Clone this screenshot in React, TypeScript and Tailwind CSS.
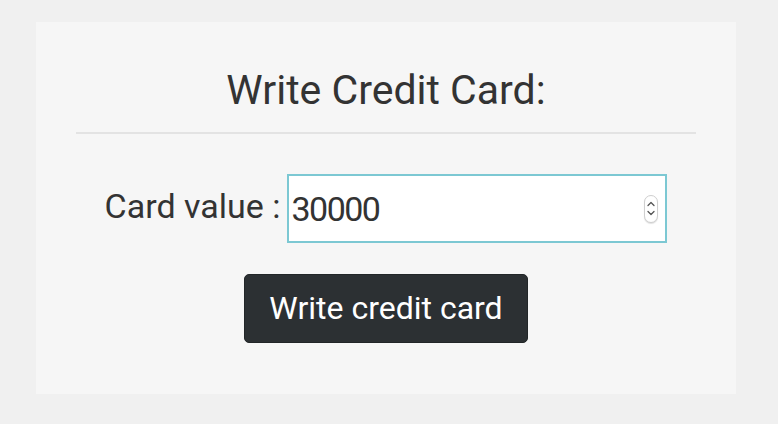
import React from 'react';

function Stepper() {
  return (
    <div className="pointer-events-none absolute right-[9px] top-1/2 flex h-[28px] w-[14px] -translate-y-1/2 flex-col items-center justify-center gap-[3px] rounded-full border border-[#cfcfcf] bg-white shadow-[0_1px_1px_rgba(0,0,0,0.12)]">
      <svg width="8" height="6" viewBox="0 0 8 6" fill="none">
        <path d="M1 4.5 L4 1.5 L7 4.5" stroke="#555" strokeWidth="1.3" strokeLinecap="round" strokeLinejoin="round" />
      </svg>
      <svg width="8" height="6" viewBox="0 0 8 6" fill="none">
        <path d="M1 1.5 L4 4.5 L7 1.5" stroke="#555" strokeWidth="1.3" strokeLinecap="round" strokeLinejoin="round" />
      </svg>
    </div>
  );
}

export default function App() {
  return (
    <div className="min-h-[424px] bg-[#f0f0f0] pl-[36px] pr-[42px] pt-[22px] pb-[30px] font-['Roboto',sans-serif] text-[#333]">
      <div className="flex h-[372px] flex-col items-center bg-[#f6f6f6] px-[40px] pt-[44px]">
        <h2 className="h-[48px] text-[41px] leading-[48px]">Write Credit Card:</h2>
        <div className="mt-[18px] h-[2px] w-full bg-[#e3e3e3]" />

        <div className="mt-[40px] flex items-start gap-[7px]">
          <label htmlFor="card-value" className="h-[69px] text-[34px] leading-[65px]">
            Card value :
          </label>
          <div className="relative">
            <input
              id="card-value"
              type="text"
              inputMode="numeric"
              defaultValue="30000"
              className="h-[69px] w-[380px] border-2 border-[#7cc8d3] bg-white px-[2px] text-[34px] leading-[65px] tracking-[-1.5px] text-[#333] outline-none"
            />
            <Stepper />
          </div>
        </div>

        <button
          type="button"
          className="mt-[31px] h-[69px] rounded-[5px] border border-[#222628] bg-[#2c3033] px-[24px] text-[32px] leading-[67px] text-white"
        >
          Write credit card
        </button>
      </div>
    </div>
  );
}
